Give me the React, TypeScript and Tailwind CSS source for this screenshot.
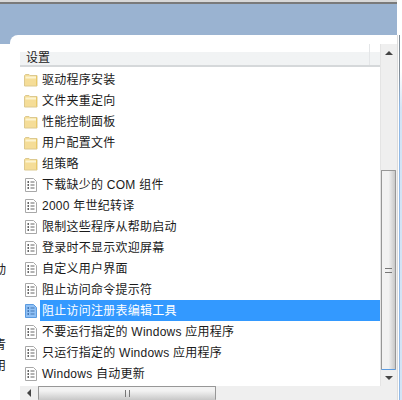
import React from "react";

const FONT = '"Liberation Sans", "Noto Sans CJK SC", sans-serif';

const folders = ["驱动程序安装", "文件夹重定向", "性能控制面板", "用户配置文件", "组策略"];
const policies = [
  "下载缺少的 COM 组件",
  "2000 年世纪转译",
  "限制这些程序从帮助启动",
  "登录时不显示欢迎屏幕",
  "自定义用户界面",
  "阻止访问命令提示符",
  "阻止访问注册表编辑工具",
  "不要运行指定的 Windows 应用程序",
  "只运行指定的 Windows 应用程序",
  "Windows 自动更新",
];

function FolderIcon() {
  return (
    <svg width="16" height="16" viewBox="0 0 16 16" className="shrink-0">
      <path d="M1.5 3.5 L2.5 2.5 H6 L7 3.5 H14 V14 H1.5 Z" fill="#f5dd98" stroke="#dcc98f" />
      <path d="M2.5 5.5 H13.5" stroke="#fcf4d2" strokeWidth="2" />
      <path d="M13.5 4 V13.5" stroke="#e8c868" />
    </svg>
  );
}

function PolicyIcon({ selected }: { selected?: boolean }) {
  const line = selected ? "#2b5f9e" : "#333333";
  return (
    <svg width="14" height="16" viewBox="0 0 14 16" className="shrink-0">
      <path
        d="M1.5 1.5 H9.5 L12.5 4.5 V14.5 H1.5 Z"
        fill={selected ? "#8fc0f5" : "#ffffff"}
        stroke={selected ? "#5b9be0" : "#a8a8a8"}
      />
      <path d="M3.5 5 H5 M3.5 8 H5 M3.5 11 H5" stroke={line} strokeWidth="1.5" />
      <path d="M6.5 5 H10.5 M6.5 8 H10.5 M6.5 11 H10.5" stroke={line} strokeWidth="1" opacity="0.75" />
    </svg>
  );
}

function Row({ label, selected, folder }: { label: string; selected?: boolean; folder?: boolean }) {
  return (
    <div className="flex h-[21px] items-center">
      <div className="flex w-[20px] shrink-0 justify-center pl-[2px]">
        {folder ? <FolderIcon /> : <PolicyIcon selected={selected} />}
      </div>
      <div
        className={
          selected
            ? "flex h-[21px] flex-1 items-center bg-[#3399ff] pl-[2px] text-white"
            : "flex h-[21px] flex-1 items-center pl-[2px] text-[#1a1a1a]"
        }
      >
        <span className="whitespace-nowrap tracking-[0.25px]">{label}</span>
      </div>
    </div>
  );
}

export default function App() {
  return (
    <div
      className="flex h-[400px] w-[402px] flex-col overflow-hidden bg-white text-[12px]"
      style={{ fontFamily: FONT }}
    >
      <div className="mr-[5px] h-[2px] bg-[#d8d8d8]" />
      <div className="mr-[5px] h-[2px] bg-[#7a7a7a]" />
      <div className="mr-[5px] h-[31px] shrink-0 bg-[#9ab3d1]" />
      <div className="mr-[5px] h-[9px] shrink-0 bg-[#9ab3d1]">
        <div className="ml-[10px] h-[9px] rounded-tl-[8px] bg-white" />
      </div>

      <div className="flex flex-1">
        {/* left gutter with the clipped text of the pane behind */}
        <div className="flex w-[20px] shrink-0 flex-col">
          <div className="h-[217px]" />
          <div className="flex h-[18px] w-[6px] justify-end overflow-hidden text-[#222]">动</div>
          <div className="h-[57px]" />
          <div className="flex h-[18px] w-[6px] justify-end overflow-hidden text-[#222]">青</div>
          <div className="h-[3px]" />
          <div className="flex h-[18px] w-[6px] justify-end overflow-hidden text-[#222]">用</div>
        </div>

        <div className="flex flex-1 flex-col">
          <div className="flex flex-1">
            <div className="flex w-[360px] flex-col">
              <div className="flex h-[23px] border-b-2 border-[#d5d8da]">
                <div className="flex flex-1 items-end bg-gradient-to-b from-white from-40% to-[#f1f3f4] to-40%">
                  <span className="pl-[6px] leading-[14px] text-[#222]">设置</span>
                </div>
                <div className="w-[1px] bg-[#e4e6e8]" />
                <div className="w-[10px] bg-gradient-to-b from-white from-40% to-[#f1f3f4] to-40%" />
              </div>
              <div className="pt-[2px]">
                {folders.map((f) => (
                  <Row key={f} label={f} folder />
                ))}
                {policies.map((p) => (
                  <Row key={p} label={p} selected={p === "阻止访问注册表编辑工具"} />
                ))}
              </div>
            </div>

            {/* vertical scrollbar */}
            <div className="flex w-[17px] flex-col border-l border-[#e4e4e4] bg-[#efefef]">
              <div className="flex h-[17px] items-center justify-center">
                <div className="h-0 w-0 border-x-[4px] border-b-[4px] border-x-transparent border-b-[#444]" />
              </div>
              <div className="h-[109px]" />
              <div className="flex h-[200px] w-[15px] items-center justify-center rounded-[1px] border border-[#979797] border-b-[#5b9be0] bg-gradient-to-r from-[#f2f2f2] from-50% to-[#c8c8c8]">
                <div className="h-[5px] w-[7px] border-y border-[#777]" />
              </div>
              <div className="flex h-[16px] items-center justify-center">
                <div className="h-0 w-0 border-x-[4px] border-t-[4px] border-x-transparent border-t-[#444]" />
              </div>
            </div>
          </div>

          {/* horizontal scrollbar */}
          <div className="flex h-[14px] shrink-0 bg-[#efefef]">
            <div className="flex w-[18px] items-center justify-center">
              <div className="h-0 w-0 border-y-[4px] border-r-[4px] border-y-transparent border-r-[#444]" />
            </div>
            <div className="flex w-[178px] items-center justify-center rounded-[1px] border border-b-0 border-[#979797] bg-gradient-to-b from-[#f2f2f2] from-30% to-[#c8c8c8]">
              <div className="h-[7px] w-[5px] border-x border-[#777]" />
            </div>
          </div>
        </div>

        {/* window frame at the right edge */}
        <div className="-mt-[9px] flex w-[5px] shrink-0">
          <div className="w-[2px] border-l border-[#dcdcdc]" />
          <div className="w-[1px] bg-gradient-to-b from-[#7f8a94] from-10% to-[#8fb8e6] to-20%" />
          <div className="flex-1 bg-gradient-to-b from-white from-10% to-[#d4e4f5] to-20%" />
        </div>
      </div>
    </div>
  );
}
